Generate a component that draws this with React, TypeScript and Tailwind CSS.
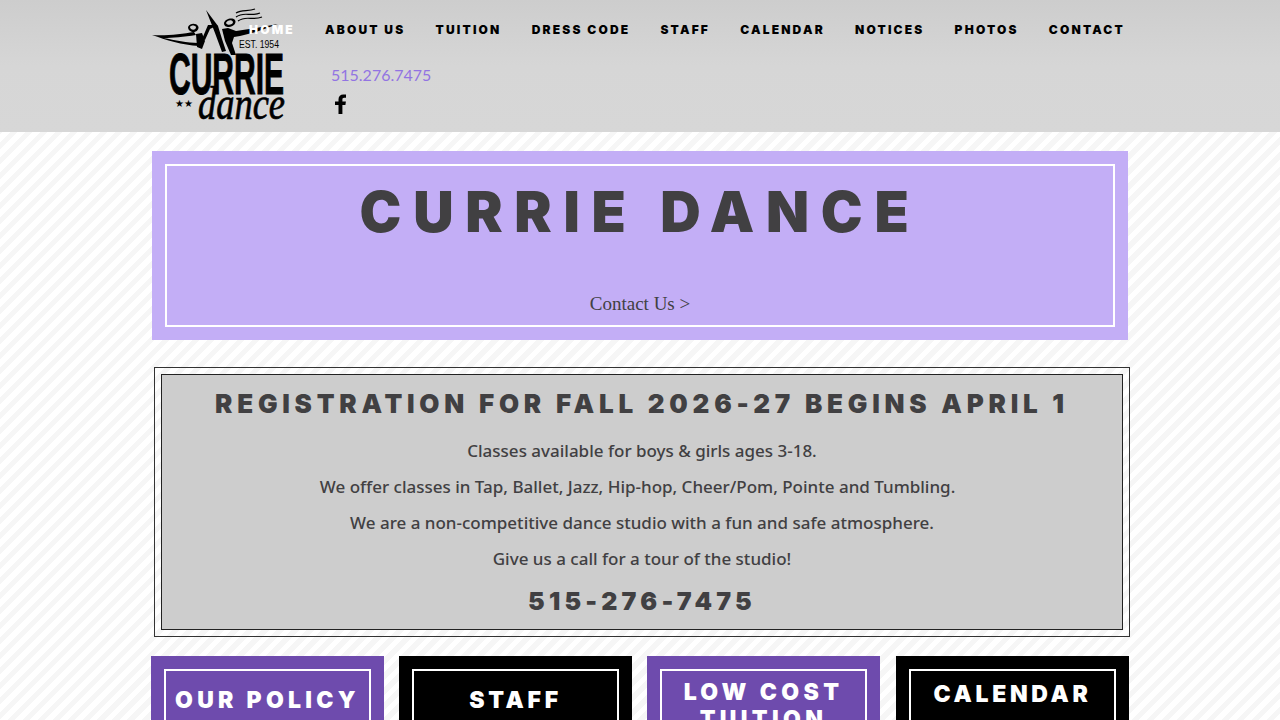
import React from 'react';

const navItems = ['ABOUT US', 'TUITION', 'DRESS CODE', 'STAFF', 'CALENDAR', 'NOTICES', 'PHOTOS', 'CONTACT'];

const bodyLines = [
  'Classes available for boys & girls ages 3-18.',
  'We offer classes in Tap, Ballet, Jazz, Hip-hop, Cheer/Pom, Pointe and Tumbling.\u00a0\u00a0',
  'We are a non-competitive dance studio with a fun and safe atmosphere.',
  'Give us a call for a tour of the studio!',
];

const cards = [
  { title: 'OUR POLICY', bg: 'bg-[#6e4bad]', text: 'pt-[15px] leading-[28px] tracking-[0.186em] whitespace-nowrap', gap: '' },
  { title: 'STAFF', bg: 'bg-black', text: 'pt-[15px] leading-[28px] tracking-[0.16em]', gap: '' },
  { title: 'LOW COST TUITION', bg: 'bg-[#6e4bad]', text: 'pt-[8px] leading-[27px] tracking-[0.19em]', gap: '' },
  { title: 'CALENDAR', bg: 'bg-black', text: 'pt-[9px] leading-[28px] tracking-[0.16em]', gap: 'ml-[1px]' },
];

const Logo = () => (
  <svg width="134" height="124" viewBox="0 0 134 124" className="shrink-0">
    {/* dancers */}
    <path d="M0 34 C14 35 30 33 42 31 L44 34 C32 36 20 37 12 37 C22 39 36 42 46 42 L47 45 C30 44 14 39 0 34Z" fill="#000" />
    <path d="M36 26 C38 22 44 22 46 25 C48 28 44 32 40 31 C37 30 36 28 36 26Z M38 26 C38 29 44 30 44 26 C43 24 39 24 38 26Z" fill="#000" fillRule="evenodd" />
    <path d="M44 33 L50 32 L53 40 L50 48 L45 46Z" fill="#000" />
    <path d="M54 9 L66 25 L70 38 L74 50 L70 51 L63 32Z" fill="#000" />
    <path d="M66 24 L56 24 L50 38 L53 39 L58 28Z" fill="#000" />
    <path d="M72 22 C73 18 80 16 83 19 C85 22 81 26 77 26 C74 26 72 25 72 22Z M74 22 C75 25 81 24 81 21 C80 18 75 19 74 22Z" fill="#000" fillRule="evenodd" />
    <path d="M70 28 L76 27 L84 30 L104 27 L126 23 L104 31 L88 35 L82 36 L80 42 L84 54 L79 54 L73 40Z" fill="#000" />
    <path d="M84 16 C92 10 98 16 108 12 M86 20 C94 14 100 20 110 16 M84 12 C90 8 96 11 103 8" fill="none" stroke="#000" strokeWidth="1.2" />
    <text x="87" y="47" fontFamily="'Liberation Sans Narrow', 'Liberation Sans', sans-serif" fontSize="10" textLength="40" lengthAdjust="spacingAndGlyphs" fill="#000">EST. 1954</text>
    <text x="17" y="93" fontFamily="'Liberation Sans', sans-serif" fontSize="58" fontWeight="700" textLength="115" lengthAdjust="spacingAndGlyphs" stroke="#000" strokeWidth="1" fill="#000">CURRIE</text>
    <text x="23" y="106" fontFamily="'DejaVu Sans', sans-serif" fontSize="10" fill="#000">★★</text>
    <text x="46" y="118" fontFamily="'Liberation Serif', serif" fontStyle="italic" fontSize="46" textLength="87" lengthAdjust="spacingAndGlyphs" stroke="#000" strokeWidth="0.7" fill="#000">dance</text>
  </svg>
);

const FacebookIcon = () => (
  <svg width="18" height="20" viewBox="0 0 18 20" fill="#000">
    <path d="M6.5 20V11H3V7.4H6.5V5.2C6.5 2 8.6 0.4 11.2 0.4C12.4 0.4 13.6 0.5 14 0.6V3.7H12.2C10.8 3.7 10.4 4.5 10.4 5.4V7.4H13.9L13.4 11H10.4V20Z" />
  </svg>
);

export default function App() {
  return (
    <div className="h-[720px] overflow-hidden bg-[repeating-linear-gradient(135deg,#ffffff_0px,#ffffff_5.3px,#f6f6f6_5.3px,#f6f6f6_10.6px)]">
      <header className="h-[132px] bg-gradient-to-b from-[#cdcdcd] via-[#d6d6d6] to-[#d7d7d7]">
        <div className="mx-auto flex w-[976px]">
          <div className="mt-[1px] -mr-[37px]">
            <Logo />
          </div>
          <div className="relative flex-1">
            <nav className="flex h-[59px] items-center justify-between pr-[3px] font-['Inter',sans-serif] text-[12px] font-black tracking-[0.183em] whitespace-nowrap">
              <span className="text-white">HOME</span>
              {navItems.map((item) => (
                <span key={item} className="text-black">{item}</span>
              ))}
            </nav>
            <div className="ml-[82px] mt-[4px] font-['Lato',sans-serif] text-[16px] leading-[23px] text-[#9274e2]">515.276.7475</div>
            <div className="ml-[83px] mt-[8px]">
              <FacebookIcon />
            </div>
          </div>
        </div>
      </header>

      <main className="mx-auto w-[976px]">
        <section className="mt-[19px] h-[189px] bg-[#c3aef6] p-[13px]">
          <div className="h-full border-2 border-white text-center">
            <h1 className="mt-[16px] font-['Inter',sans-serif] text-[56px] leading-[60px] font-black tracking-[0.209em] whitespace-nowrap text-[#414042]">CURRIE DANCE</h1>
            <p className="mt-[50px] font-['Liberation_Serif',serif] text-[19px] leading-[24px] text-[#414042]">Contact Us &gt;</p>
          </div>
        </section>

        <section className="mt-[27px] ml-[2px] -mr-[2px] h-[270px] border border-[#333] p-[6px]">
          <div className="flex h-full flex-col items-center border border-[#222] bg-[#cdcdcd] text-center text-[#414042]">
            <h2 className="mt-[13px] font-['Inter',sans-serif] text-[26px] leading-[32px] font-black tracking-[0.183em] whitespace-nowrap">REGISTRATION FOR FALL 2026-27 BEGINS APRIL 1</h2>
            <div className="mt-[13px] font-['Noto_Sans',sans-serif] text-[17px] leading-[36px] font-medium">
              {bodyLines.map((line) => (
                <p key={line}>{line}</p>
              ))}
            </div>
            <p className="mt-[8px] font-['Inter',sans-serif] text-[25px] leading-[32px] font-black tracking-[0.17em]">515-276-7475</p>
          </div>
        </section>

        <section className="mt-[19px] -ml-[1px] flex w-[978px] gap-[15px]">
          {cards.map((card) => (
            <div key={card.title} className={`h-[233px] w-[233px] shrink-0 p-[13px] ${card.bg} ${card.gap}`}>
              <div className={`h-full border-2 border-white text-center font-['Inter',sans-serif] text-[23px] font-black text-white ${card.text}`}>
                {card.title}
              </div>
            </div>
          ))}
        </section>
      </main>
    </div>
  );
}
